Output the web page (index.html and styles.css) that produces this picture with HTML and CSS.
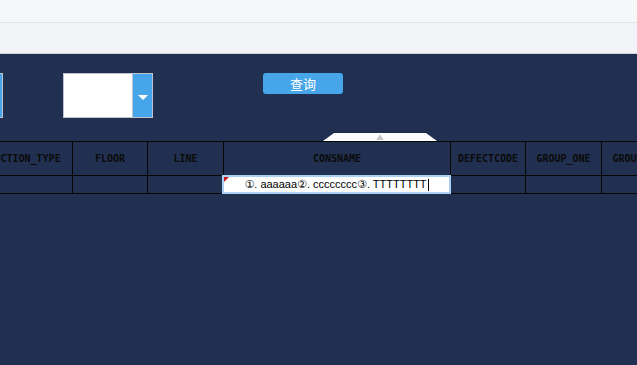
FILE: index.html
```html
<!DOCTYPE html>
<html lang="zh-CN">
<head>
    <meta charset="UTF-8">
    <meta name="viewport" content="width=device-width, initial-scale=1.0">
    <title>缺陷查询</title>
    <link rel="stylesheet" href="styles.css">
</head>
<body>
    <div class="top-bar"></div>
    <div class="tab-bar"></div>

    <div class="main">
        <div class="filters">
            <div class="select-stub"></div>
            <div class="select">
                <div class="select-value"></div>
                <div class="select-btn"><span class="arrow"></span></div>
            </div>
            <button class="query-btn">查询</button>
        </div>

        <div class="grid-wrap">
            <svg class="sort-tip" width="114" height="8" viewBox="0 0 114 8">
                <polygon points="11,0 103,0 114,8 0,8" fill="#ffffff"/>
                <polygon points="53,7 57,1.5 61,7" fill="#c9c9c9"/>
            </svg>
            <div class="grid">
                <div class="row head">
                    <div class="cell c1">PRODUCTION_TYPE</div>
                    <div class="cell c2">FLOOR</div>
                    <div class="cell c3">LINE</div>
                    <div class="cell c4">CONSNAME</div>
                    <div class="cell c5">DEFECTCODE</div>
                    <div class="cell c6">GROUP_ONE</div>
                    <div class="cell c7">GROUP_TWO</div>
                </div>
                <div class="row body">
                    <div class="cell c1"></div>
                    <div class="cell c2"></div>
                    <div class="cell c3"></div>
                    <div class="cell c4">
                        <div class="editor">
                            <span class="dirty"></span>
                            <span class="editor-text">①. aaaaaa②. cccccccc③. TTTTTTTT</span><span class="caret"></span>
                        </div>
                    </div>
                    <div class="cell c5"></div>
                    <div class="cell c6"></div>
                    <div class="cell c7"></div>
                </div>
            </div>
        </div>
    </div>
</body>
</html>
```

FILE: styles.css
```css
body, html {
    margin: 0;
    padding: 0;
    height: 100%;
    overflow: hidden;
    font-family: "Liberation Sans", Arial, sans-serif;
    background-color: #213050;
}

.top-bar {
    height: 22px;
    background-color: #f6f7f9;
    border-bottom: 1px solid #e2e5ea;
}

.tab-bar {
    height: 30px;
    background-color: #f2f3f7;
    border-bottom: 1px solid #cfd3da;
}

.main {
    padding-top: 19px;
}

.filters {
    display: flex;
    align-items: flex-start;
    height: 45px;
}

.select-stub {
    width: 2px;
    height: 43px;
    background-color: #46a6e9;
    border: 1px solid #bfc4cc;
    border-left: none;
}

.select {
    display: flex;
    width: 90px;
    height: 45px;
    margin-left: 60px;
    box-sizing: border-box;
    border: 1px solid #bfc4cc;
}

.select-value {
    flex: 1;
    background-color: #ffffff;
}

.select-btn {
    width: 19px;
    background-color: #46a6e9;
    border-left: 1px solid #bfc4cc;
    display: flex;
    align-items: center;
    justify-content: center;
}

.arrow {
    width: 0;
    height: 0;
    margin-top: 3px;
    border-left: 5px solid transparent;
    border-right: 5px solid transparent;
    border-top: 5px solid #ffffff;
}

.query-btn {
    width: 80px;
    height: 21px;
    margin-left: 110px;
    padding: 0;
    border: none;
    border-radius: 3px;
    background-color: #46a6e9;
    color: #ffffff;
    font-family: "Noto Sans CJK SC", sans-serif;
    font-size: 13px;
    line-height: 21px;
}

.grid-wrap {
    position: relative;
    margin-top: 23px;
}

.sort-tip {
    position: absolute;
    left: 323px;
    top: -8px;
    display: block;
}

.grid {
    margin-left: -41px;
}

.row {
    display: flex;
    border-bottom: 1px solid #050505;
    width: max-content;
}

.row.head {
    border-top: 1px solid #050505;
    height: 33px;
}

.row.body {
    height: 17px;
}

.cell {
    box-sizing: border-box;
    flex: none;
    border-right: 1px solid #050505;
    display: flex;
    align-items: center;
    justify-content: center;
    font-family: "DejaVu Sans Mono", monospace;
    font-size: 10px;
    font-weight: bold;
    color: #0a0a0a;
    white-space: nowrap;
    overflow: visible;
}

.c1 { width: 114px; }
.c2 { width: 75px; }
.c3 { width: 76px; }
.c4 { width: 227px; position: relative; }
.c5 { width: 75px; }
.c6 { width: 76px; }
.c7 { width: 76px; }

.editor {
    position: absolute;
    left: -2px;
    top: -1px;
    width: 229px;
    height: 19px;
    box-sizing: border-box;
    border: 2px solid #a9cff3;
    background-color: #ffffff;
    display: flex;
    align-items: center;
    justify-content: center;
    font-family: "Liberation Sans", "DejaVu Sans", sans-serif;
    font-size: 11px;
    font-weight: normal;
    color: #000000;
}

.dirty {
    position: absolute;
    left: 0;
    top: 0;
    width: 0;
    height: 0;
    border-top: 5px solid #c81818;
    border-right: 5px solid transparent;
}

.caret {
    display: inline-block;
    width: 1px;
    height: 12px;
    margin-left: 1px;
    background-color: #000000;
}
```
